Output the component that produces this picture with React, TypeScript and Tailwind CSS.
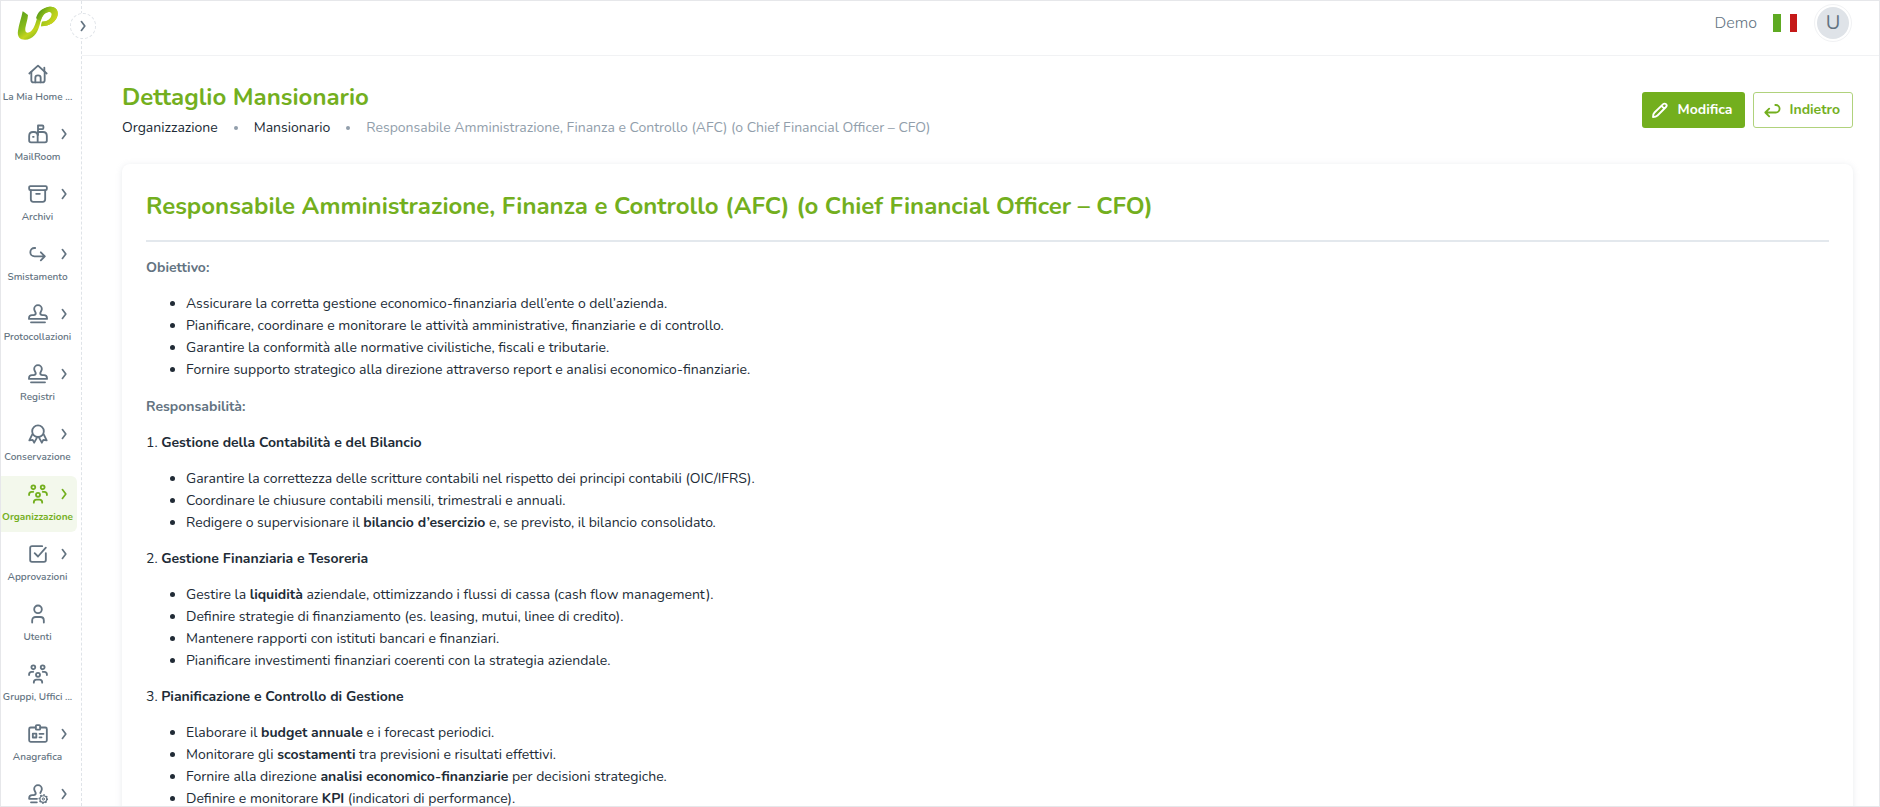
import type { ReactNode } from "react";

type NavItem = {
  label: string;
  icon: ReactNode;
  expandable?: boolean;
  active?: boolean;
};

function Icon({ children }: { children: ReactNode }) {
  return (
    <svg
      className="size-5"
      viewBox="0 0 24 24"
      fill="none"
      stroke="currentColor"
      strokeWidth="2.2"
      strokeLinecap="round"
      strokeLinejoin="round"
      aria-hidden="true"
    >
      {children}
    </svg>
  );
}

function Chevron() {
  return (
    <svg
      className="h-3 w-2"
      viewBox="0 0 8 12"
      fill="none"
      stroke="currentColor"
      strokeWidth="1.7"
      strokeLinecap="round"
      strokeLinejoin="round"
      aria-hidden="true"
    >
      <path d="M2.4 1.6 5.8 6 2.4 10.4" />
    </svg>
  );
}

const stampIcon = (
  <Icon>
    <path d="M9.3 11.2C9.3 9.4 7.4 8.3 7.4 6a4.6 4.6 0 0 1 9.2 0c0 2.3-1.9 3.4-1.9 5.2 0 1.6 1 2.1 2.6 2.1h1.9c2.3 0 3.6 1.4 3.6 3.8v.8H1.2v-.8c0-2.4 1.3-3.8 3.6-3.8h1.9c1.6 0 2.6-.5 2.6-2.1Z" />
    <path d="M3.6 22h16.8" />
  </Icon>
);

const groupIcon = (
  <Icon>
    <circle cx="6.4" cy="4" r="2.3" />
    <circle cx="17.6" cy="4" r="2.3" />
    <circle cx="12" cy="13" r="2.4" />
    <path d="M1.3 13.2v-.6c0-2 1.2-3.2 3.1-3.2h1.9M22.7 13.2v-.6c0-2-1.2-3.2-3.1-3.2h-1.9" />
    <path d="M7 22.4v-.5c0-2 1.2-3.2 3.2-3.2h3.6c2 0 3.2 1.2 3.2 3.2v.5" />
  </Icon>
);

const navItems: NavItem[] = [
  {
    label: "La Mia Home ...",
    icon: (
      <Icon>
        <path d="M1.6 11.4 12 2l10.4 9.4" />
        <path d="M4 9.6v9.8c0 1.6 1 2.6 2.6 2.6h10.8c1.6 0 2.6-1 2.6-2.6V9.6" />
        <path d="M8.8 22v-5.6c0-1.8 1-2.8 3.2-2.8s3.2 1 3.2 2.8V22" />
        <path d="M19.6 8V4.4" />
      </Icon>
    ),
  },
  {
    label: "MailRoom",
    expandable: true,
    icon: (
      <Icon>
        <path d="M12 9.6h6c2.8 0 4.6 1.9 4.6 4.8v5.4c0 1.5-.8 2.2-2.2 2.2H3.6c-1.4 0-2.2-.7-2.2-2.2v-5.4c0-2.9 1.8-4.8 4.6-4.8h1.2c2.8 0 4.4 1.9 4.4 4.8V22" />
        <path d="M12 13.2V1.8h5.2c.9 0 1.3.4 1.3 1.2v1.9c0 .8-.4 1.2-1.3 1.2H12" />
        <path d="M6 15.4h.8" />
      </Icon>
    ),
  },
  {
    label: "Archivi",
    expandable: true,
    icon: (
      <Icon>
        <rect x="1.4" y="2.6" width="21.2" height="4.8" rx="1.4" />
        <path d="M3.4 7.4v11c0 2 1 3 3 3h11.2c2 0 3-1 3-3v-11M9.8 11.8h4.4" />
      </Icon>
    ),
  },
  {
    label: "Smistamento",
    expandable: true,
    icon: (
      <Icon>
        <path d="M8.6 4.8h-.8a5 5 0 0 0 0 10h12.4M15.4 10l4.8 4.8-4.8 4.8" />
      </Icon>
    ),
  },
  { label: "Protocollazioni", expandable: true, icon: stampIcon },
  { label: "Registri", expandable: true, icon: stampIcon },
  {
    label: "Conservazione",
    expandable: true,
    icon: (
      <Icon>
        <circle cx="12" cy="8.6" r="7" />
        <path d="m5 12.8-3.4 6.8 4-.6 1.8 3.4 3.2-5.8M19 12.8l3.4 6.8-4-.6-1.8 3.4-3.2-5.8" />
      </Icon>
    ),
  },
  { label: "Organizzazione", expandable: true, active: true, icon: groupIcon },
  {
    label: "Approvazioni",
    expandable: true,
    icon: (
      <Icon>
        <path d="M17 2.6H4.8c-1.4 0-2.2.8-2.2 2.2v14.4c0 1.4.8 2.2 2.2 2.2h14.4c1.4 0 2.2-.8 2.2-2.2V11" />
        <path d="m8 11 4 4L21.4 4.4" />
      </Icon>
    ),
  },
  {
    label: "Utenti",
    icon: (
      <Icon>
        <circle cx="12" cy="6.4" r="4.6" />
        <path d="M5 22.2v-2.4c0-2.6 1.6-4.2 4.2-4.2h5.6c2.6 0 4.2 1.6 4.2 4.2v2.4" />
      </Icon>
    ),
  },
  { label: "Gruppi, Uffici ...", icon: groupIcon },
  {
    label: "Anagrafica",
    expandable: true,
    icon: (
      <Icon>
        <path d="M9 4.2H3.2c-1.2 0-1.8.6-1.8 1.8v13.6c0 1.2.6 1.8 1.8 1.8h17.6c1.2 0 1.8-.6 1.8-1.8V6c0-1.2-.6-1.8-1.8-1.8H15" />
        <rect x="9.4" y="1.4" width="5.2" height="5.4" rx="1.2" />
        <rect x="5.8" y="11.6" width="4.2" height="4.6" />
        <path d="M13.8 11.8h4.8M13.8 16h2.4" />
      </Icon>
    ),
  },
  {
    label: "",
    expandable: true,
    icon: (
      <Icon>
        <path d="M10.8 17.8H1.4v-.8c0-2.4 1.3-3.7 3.6-3.7h1.7c1.6 0 2.6-.5 2.6-2.1C9.3 9.4 7.4 8.3 7.4 6a4.6 4.6 0 0 1 9.2 0c0 2.1-1.4 3.1-1.8 4.8M3.6 22h7" />
        <circle cx="18.4" cy="18" r="5" strokeWidth="1.6" strokeDasharray="0.8 3.1" />
        <circle cx="18.4" cy="18" r="4" strokeWidth="1.3" />
        <circle cx="18.4" cy="18" r="1.3" strokeWidth="1.2" />
      </Icon>
    ),
  },
];

type Section = { title: string; items: ReactNode[] };

const goals = [
  "Assicurare la corretta gestione economico-finanziaria dell’ente o dell’azienda.",
  "Pianificare, coordinare e monitorare le attività amministrative, finanziarie e di controllo.",
  "Garantire la conformità alle normative civilistiche, fiscali e tributarie.",
  "Fornire supporto strategico alla direzione attraverso report e analisi economico-finanziarie.",
];

const sections: Section[] = [
  {
    title: "Gestione della Contabilità e del Bilancio",
    items: [
      "Garantire la correttezza delle scritture contabili nel rispetto dei principi contabili (OIC/IFRS).",
      "Coordinare le chiusure contabili mensili, trimestrali e annuali.",
      <>Redigere o supervisionare il <strong>bilancio d’esercizio</strong> e, se previsto, il bilancio consolidato.</>,
    ],
  },
  {
    title: "Gestione Finanziaria e Tesoreria",
    items: [
      <>Gestire la <strong>liquidità</strong> aziendale, ottimizzando i flussi di cassa (cash flow management).</>,
      "Definire strategie di finanziamento (es. leasing, mutui, linee di credito).",
      "Mantenere rapporti con istituti bancari e finanziari.",
      "Pianificare investimenti finanziari coerenti con la strategia aziendale.",
    ],
  },
  {
    title: "Pianificazione e Controllo di Gestione",
    items: [
      <>Elaborare il <strong>budget annuale</strong> e i forecast periodici.</>,
      <>Monitorare gli <strong>scostamenti</strong> tra previsioni e risultati effettivi.</>,
      <>Fornire alla direzione <strong>analisi economico-finanziarie</strong> per decisioni strategiche.</>,
      <>Definire e monitorare <strong>KPI</strong> (indicatori di performance).</>,
    ],
  },
];

const roleName =
  "Responsabile Amministrazione, Finanza e Controllo (AFC) (o Chief Financial Officer – CFO)";

function Logo() {
  return (
    <svg className="h-9 w-11" viewBox="48 16 132 108" fill="none" role="img" aria-label="UP">
      <defs>
        <linearGradient id="logo-u" x1="60" y1="40" x2="112" y2="110" gradientUnits="userSpaceOnUse">
          <stop offset="0" stopColor="#5fa31a" />
          <stop offset="0.5" stopColor="#8dbd1b" />
          <stop offset="0.75" stopColor="#c3d41c" />
          <stop offset="1" stopColor="#8dbd1b" />
        </linearGradient>
        <linearGradient id="logo-p" x1="108" y1="30" x2="165" y2="70" gradientUnits="userSpaceOnUse">
          <stop offset="0" stopColor="#3f8a14" />
          <stop offset="0.5" stopColor="#9cc51b" />
          <stop offset="1" stopColor="#d5d81c" />
        </linearGradient>
      </defs>
      {/* U with its right arm rising into the bowl */}
      <path
        d="M68 35c5 2 11 8 16 11-1 14-6 28-8 39-1 9 1 14 6 14 11 0 19-13 24-27 8-20 8-42 38-50 20-5 32 8 29 24-4 20-24 34-50 34l3-14c15 0 26-7 29-19 2-8-3-12-12-9-16 5-19 20-24 38-7 26-21 44-44 44-16 0-24-10-21-27 3-20 10-37 14-58Z"
        fill="url(#logo-u)"
      />
      <path
        d="M108 56c5-18 15-29 36-34 20-5 32 8 29 24-4 20-24 34-50 34l3-14c15 0 26-7 29-19 2-8-3-12-12-9-13 4-17 14-21 26Z"
        fill="url(#logo-p)"
      />
    </svg>
  );
}

function Sidebar() {
  return (
    <aside className="relative flex w-[81px] shrink-0 flex-col border-r border-dashed border-[#dfe3e8]">
      <a href="#home" className="flex h-[55px] shrink-0 items-start pt-1 pl-[15px]">
        <Logo />
      </a>
      <button
        type="button"
        aria-label="Espandi menu"
        className="absolute top-3 -right-[15px] flex size-[26px] items-center justify-center rounded-full border border-dashed border-[#dfe3e8] bg-white text-[#637381]"
      >
        <Chevron />
      </button>
      <nav className="flex min-h-0 flex-1 flex-col gap-1 overflow-hidden">
        {navItems.map((item) => (
          <a
            key={item.label}
            href="#menu"
            className={
              item.active
                ? "flex h-14 w-[76px] shrink-0 flex-col items-center gap-[5px] rounded-r-md bg-[#f3f8ec] pt-2 pr-[3px] font-bold text-[#73af1e]"
                : "flex h-14 w-[76px] shrink-0 flex-col items-center gap-[5px] pt-2 pr-[3px] font-semibold text-[#637381]"
            }
          >
            <span className="grid w-full grid-cols-[1fr_20px_1fr] items-center">
              <span className="col-start-2">{item.icon}</span>
              {item.expandable && (
                <span className="justify-self-end pr-1.5">
                  <Chevron />
                </span>
              )}
            </span>
            <span className="text-[10px] leading-4 whitespace-nowrap">{item.label}</span>
          </a>
        ))}
      </nav>
    </aside>
  );
}

function TopBar() {
  return (
    <header className="flex h-[55px] shrink-0 items-center justify-end border-b border-[#f1f2f4] pr-[27px] pb-2.5">
      <span className="mr-4 text-base font-light text-[#637381]">Demo</span>
      <button type="button" aria-label="Italiano" className="mr-[17px]">
        <svg className="h-[18px] w-6" viewBox="0 0 24 18" aria-hidden="true">
          <path d="M0 0h8v18H0z" fill="#5eaa22" />
          <path d="M8 0h9v18H8z" fill="#fff" />
          <path d="M17 0h7v18h-7z" fill="#c51918" />
        </svg>
      </button>
      <button
        type="button"
        aria-label="Profilo"
        className="flex size-[38px] items-center justify-center rounded-full border border-[#f1f2f4] bg-white"
      >
        <span className="flex size-8 items-center justify-center rounded-full bg-[#dfe3e8] text-xl text-[#637381]">
          U
        </span>
      </button>
    </header>
  );
}

function PageHeading() {
  return (
    <div className="flex items-center justify-between">
      <div>
        <h1 className="mb-0.5 text-2xl leading-[34px] font-bold text-[#73af1e]">Dettaglio Mansionario</h1>
        <nav aria-label="Percorso">
          <ol className="flex items-center gap-4 text-sm leading-6 text-[#212b36]">
            <li>
              <a href="#organizzazione">Organizzazione</a>
            </li>
            <li className="size-1 rounded-full bg-[#919eab]" aria-hidden="true" />
            <li>
              <a href="#mansionario">Mansionario</a>
            </li>
            <li className="size-1 rounded-full bg-[#919eab]" aria-hidden="true" />
            <li className="text-[#919eab]">{roleName}</li>
          </ol>
        </nav>
      </div>
      <div className="flex gap-2 text-sm font-bold">
        <button
          type="button"
          className="flex h-9 items-center gap-2 rounded-[3px] bg-[#73af1e] pr-3 pl-2 text-white"
        >
          <Icon>
            <path d="M15.8 5c1-1 2.4-1 3.4 0s1 2.4 0 3.4L9 18.6c-1.2 1.2-3 1.8-5.4 1.8 0-2.4.6-4.2 1.8-5.4ZM13.8 7l3.4 3.4" />
          </Icon>
          Modifica
        </button>
        <button
          type="button"
          className="flex h-9 items-center gap-2 rounded-[3px] border border-[#b0d27c] bg-white pr-3 pl-2 text-[#73af1e]"
        >
          <Icon>
            <path d="M16 6h.6a4.4 4.4 0 0 1 0 9H4M8.6 10.4 4 15l4.6 4.6" />
          </Icon>
          Indietro
        </button>
      </div>
    </div>
  );
}

function BulletList({ items }: { items: ReactNode[] }) {
  return (
    <ul className="list-disc pl-10">
      {items.map((item, i) => (
        <li key={i}>{item}</li>
      ))}
    </ul>
  );
}

export default function App() {
  return (
    <div className="flex h-screen overflow-hidden border border-[#e6e7ea] bg-white font-['Nunito',Roboto,sans-serif] text-[#212b36]">
      <Sidebar />
      <div className="flex min-w-0 flex-1 flex-col">
        <TopBar />
        <main className="min-h-0 flex-1 overflow-hidden pt-6 pr-[26px] pl-10">
          <PageHeading />

          <article className="mt-6 rounded-lg bg-white px-6 pt-6 pb-10 shadow-[0_1px_6px_rgba(145,158,171,0.22)]">
            <h2 className="text-2xl leading-9 font-bold text-[#73af1e]">{roleName}</h2>
            <hr className="mt-4 mb-[15px] border-t-2 border-[#e3e8ed]" />
            <div className="flex flex-col gap-[15px] text-sm leading-[22px]">
              <div className="flex flex-col gap-3.5">
                <h3 className="font-bold text-[#637381]">Obiettivo:</h3>
                <BulletList items={goals} />
              </div>
              <div className="flex flex-col gap-3.5">
                <h3 className="font-bold text-[#637381]">Responsabilità:</h3>
                {sections.map((section, i) => (
                  <section key={section.title} className="flex flex-col gap-3.5">
                    <p>
                      {i + 1}. <strong>{section.title}</strong>
                    </p>
                    <BulletList items={section.items} />
                  </section>
                ))}
              </div>
            </div>
          </article>
        </main>
      </div>
    </div>
  );
}
